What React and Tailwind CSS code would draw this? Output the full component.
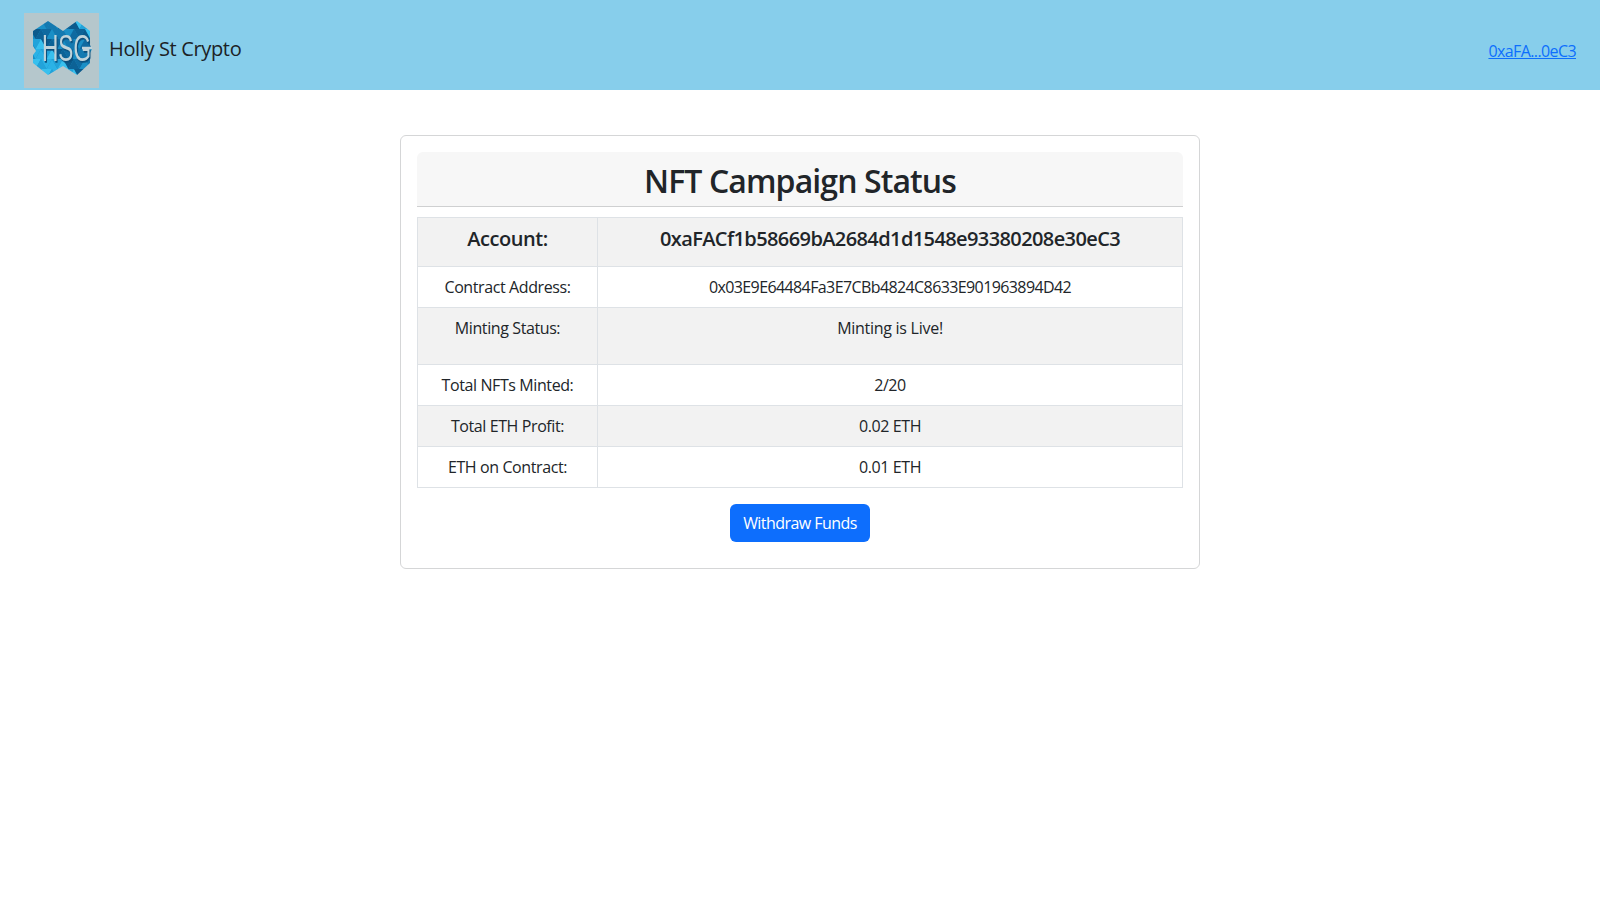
const font = { fontFamily: '"Open Sans", "Noto Sans", sans-serif' };

const rows = [
  { label: 'Contract Address:', value: '0x03E9E64484Fa3E7CBb4824C8633E901963894D42', h: 'h-[41px]', valueClass: 'tracking-[-0.6px]' },
  { label: 'Minting Status:', value: 'Minting is Live!', h: 'h-[57px]', striped: true, valueClass: 'tracking-[-0.27px]' },
  { label: 'Total NFTs Minted:', value: '2/20', h: 'h-[41px]' },
  { label: 'Total ETH Profit:', value: '0.02 ETH', h: 'h-[41px]', striped: true },
  { label: 'ETH on Contract:', value: '0.01 ETH', h: 'h-[40px]' },
];

// facet colours for the logo, cycled over a triangle lattice
const shades = ['#0f6aa0', '#2bb2e6', '#1a8fc6', '#0b5a8c', '#38c0ee', '#1479b0', '#22a3da', '#0d6296'];
const facets = [];
for (let row = 0; row < 6; row++) {
  for (let col = 0; col < 6; col++) {
    const x = 6 + col * 11;
    const y = 6 + row * 10;
    facets.push({ points: `${x},${y} ${x + 11},${y} ${x + 5.5},${y + 10}`, fill: shades[(row * 3 + col * 5) % 8] });
    facets.push({ points: `${x + 11},${y} ${x + 5.5},${y + 10} ${x + 16.5},${y + 10}`, fill: shades[(row * 5 + col * 3 + 2) % 8] });
  }
}

function Logo() {
  return (
    <svg viewBox="0 0 75 75" className="h-[75px] w-[75px] bg-[#b5c7cc]">
      <defs>
        <clipPath id="hsg-shape">
          <path d="M9 18 L24 8 L39 18 L53 8 L66 18 L66 32 L68 36 L66 40 L66 50 L53 62 L39 53 L24 62 L9 50 L9 42 L12 38 L9 33 Z" />
        </clipPath>
      </defs>
      <g clipPath="url(#hsg-shape)">
        <g className="blur-[0.5px]">
          <rect x="0" y="0" width="75" height="75" fill="#1a8fc6" />
          {facets.map((f) => (
            <polygon key={f.points} points={f.points} fill={f.fill} />
          ))}
        </g>
      </g>
      <text
        transform="translate(18,48) scale(1.03,1.7)"
        fontSize="22"
        fontFamily="Liberation Sans, sans-serif"
        fill="#bfd3da"
        className="[filter:drop-shadow(1px_1px_0_#0b4f7c)]"
      >
        HSG
      </text>
      <path d="M58 35 H68" stroke="#bfd3da" strokeWidth="2.5" />
    </svg>
  );
}

export default function App() {
  return (
    <div className="min-h-[900px] bg-white text-[#212529]" style={font}>
      <nav className="flex h-[90px] items-start justify-between bg-[#87ceeb] px-6 pt-[13px]">
        <div className="flex items-center gap-[10px]">
          <Logo />
          <span className="-mt-[3px] text-xl tracking-[-0.35px] text-[#1c2226]">Holly St Crypto</span>
        </div>
        <a href="#" className="mt-[26px] text-base tracking-[-0.6px] text-[#0d6efd] underline">0xaFA...0eC3</a>
      </nav>

      <div className="mx-auto mt-[45px] w-[800px] rounded-md border border-[#d5d6d7] p-4">
        <div className="flex h-[55px] items-center justify-center rounded-t-md border-b border-[#cfd0d1] bg-[#f7f7f7]">
          <h1 className="mt-[3px] text-[32px] font-semibold tracking-[-0.9px]">NFT Campaign Status</h1>
        </div>

        <div className="mt-[10px] border border-t-0 border-[#dee2e6]">
          <div className="flex h-[50px] border-y border-[#dee2e6] bg-[#f2f2f2] text-xl font-semibold">
            <div className="flex w-[180px] items-center justify-center border-r border-[#dee2e6] pb-[6px] tracking-[-0.45px]">Account:</div>
            <div className="flex flex-1 items-center justify-center pb-[6px] tracking-[-0.6px]">0xaFACf1b58669bA2684d1d1548e93380208e30eC3</div>
          </div>
          {rows.map((row) => (
            <div key={row.label} className={`flex border-b border-[#dee2e6] text-base tracking-[-0.4px] last:border-b-0 ${row.h} ${row.striped ? 'bg-[#f2f2f2]' : 'bg-white'}`}>
              <div className="w-[180px] border-r border-[#dee2e6] pt-[8px] text-center">{row.label}</div>
              <div className={`flex-1 pt-[8px] text-center ${row.valueClass || ''}`}>{row.value}</div>
            </div>
          ))}
        </div>

        <div className="mt-4 mb-[10px] flex justify-center">
          <button className="h-[38px] w-[140px] rounded-md bg-[#0d6efd] text-base tracking-[-0.55px] text-white">Withdraw Funds</button>
        </div>
      </div>
    </div>
  );
}
